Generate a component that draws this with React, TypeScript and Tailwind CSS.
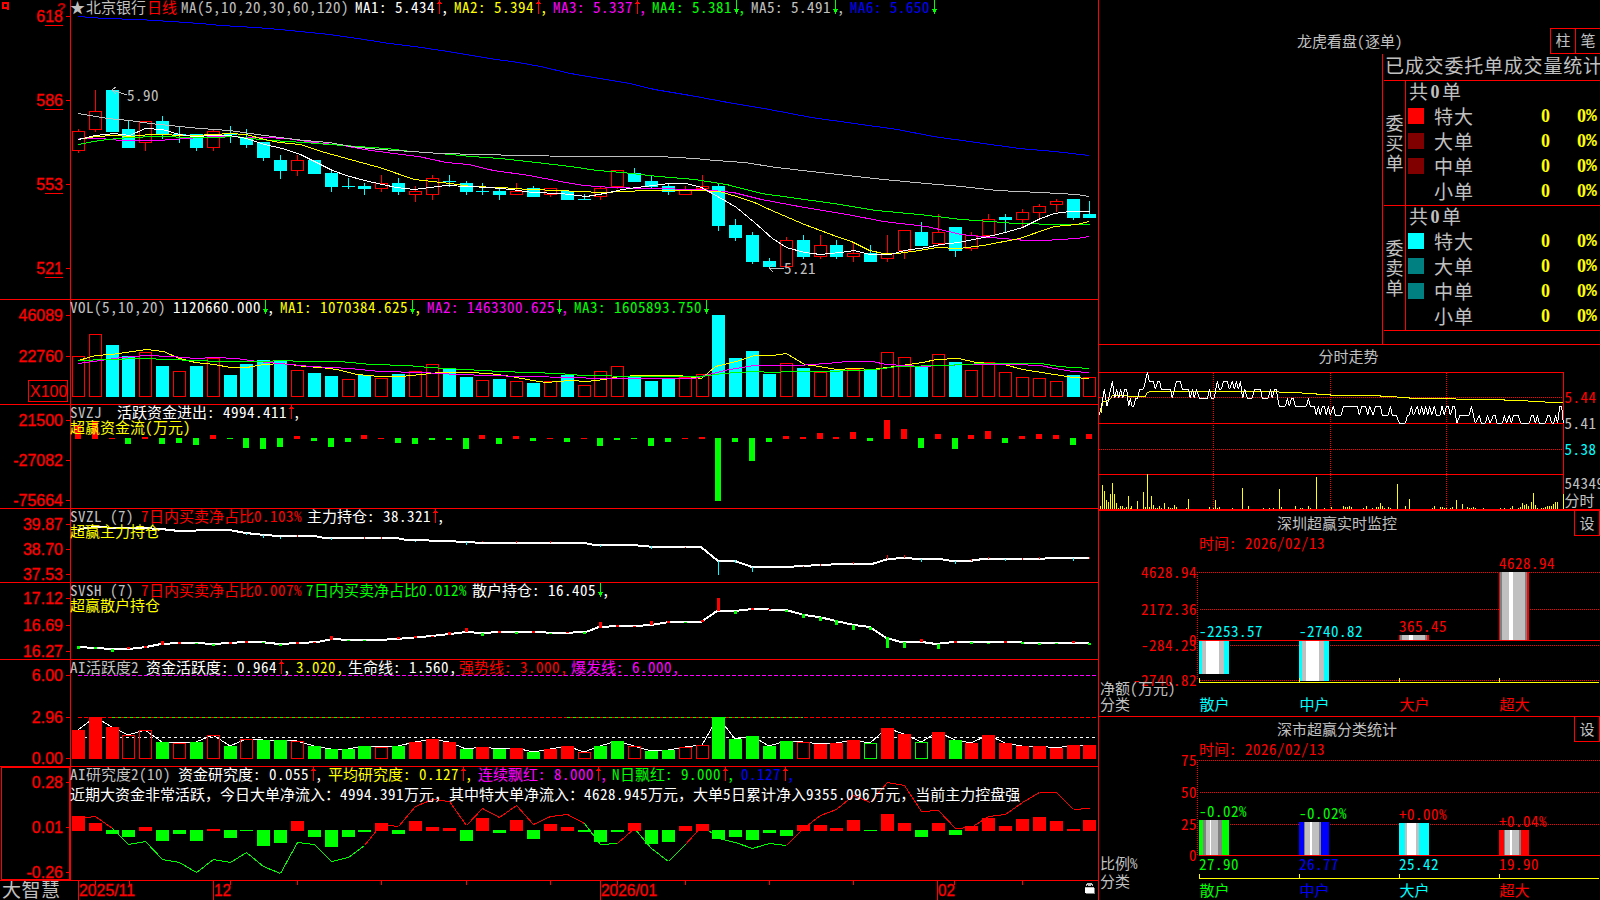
import { ReactNode } from 'react';

const RED = '#ff0000';
const CYAN = '#00ffff';
const GREEN = '#00ff00';
const YELLOW = '#ffff00';
const MAGENTA = '#ff00ff';
const GRAY = '#c0c0c0';
const BLUE = '#0000ff';

const barLeft = (i: number) => Math.floor(72.3 + 16.86 * i);
const barMid = (i: number) => barLeft(i) + 6;

// kind, body top, body bottom, high, low
const candles: [string, number, number, number, number][] = [
  ['r', 131, 151, 129, 153], ['r', 111, 130, 90, 132], ['c', 90, 132, 90, 132], ['c', 129, 148, 121, 148],
  ['r', 121, 143, 121, 151], ['c', 121, 134, 116, 139], ['c', 134, 135, 126, 143], ['c', 134, 148, 134, 151],
  ['r', 131, 148, 129, 151], ['c', 134, 135, 126, 143], ['c', 137, 145, 129, 148], ['c', 142, 158, 142, 161],
  ['c', 160, 171, 155, 179], ['r', 160, 171, 155, 176], ['c', 160, 174, 160, 174], ['c', 173, 187, 170, 192],
  ['c', 186, 187, 178, 189], ['c', 186, 189, 183, 195], ['r', 183, 189, 175, 192], ['c', 183, 192, 178, 195],
  ['r', 191, 195, 186, 202], ['r', 178, 195, 175, 200], ['c', 181, 182, 175, 187], ['c', 183, 192, 181, 195],
  ['c', 191, 192, 183, 195], ['c', 191, 195, 188, 200], ['r', 191, 195, 183, 195], ['c', 188, 197, 186, 197],
  ['r', 188, 195, 188, 197], ['c', 191, 200, 191, 200], ['c', 199, 200, 194, 200], ['r', 188, 197, 187, 200],
  ['r', 170, 187, 170, 189], ['c', 173, 182, 168, 182], ['c', 181, 187, 176, 188], ['c', 186, 192, 184, 195],
  ['r', 189, 195, 186, 195], ['r', 186, 189, 175, 189], ['c', 186, 226, 183, 231], ['c', 225, 238, 219, 241],
  ['c', 235, 262, 232, 264], ['c', 261, 267, 258, 267], ['r', 240, 267, 237, 267], ['c', 240, 257, 235, 259],
  ['r', 245, 257, 235, 259], ['c', 245, 257, 240, 259], ['r', 253, 257, 242, 262], ['c', 253, 262, 245, 262],
  ['r', 253, 259, 235, 262], ['r', 230, 251, 230, 259], ['c', 232, 246, 222, 246], ['r', 232, 244, 214, 246],
  ['c', 227, 251, 227, 257], ['r', 235, 249, 232, 251], ['r', 219, 236, 214, 238], ['c', 217, 220, 214, 232],
  ['r', 212, 220, 209, 227], ['r', 206, 213, 204, 219], ['r', 201, 205, 199, 212], ['c', 199, 218, 199, 220],
  ['c', 214, 218, 201, 218],
];

const priceLines = [
  { color: BLUE, points: '78,16 104,18 138,19 171,21 200,23 221,25 255,27 279,29 300,31 329,34 357,38 389,43 421,47 454,52 489,58 518,62 540,66 570,73 629,83 654,89 690,95 733,103 769,109 811,117 854,123 897,129 933,136 976,142 1019,148 1054,151 1089,155' },
  { color: MAGENTA, points: '78,138 100,138 121,140 157,140 186,138 214,136 264,137 286,138 314,142 343,145 364,149 393,153 418,156 446,162 468,164 493,170 529,175 560,181 583,185 611,187 647,188 701,189 733,192 761,199 804,207 847,214 883,221 926,226 961,234 990,237 1026,240 1044,240 1076,238 1089,236' },
  { color: GREEN, points: '78,144 93,141 107,139 129,137 157,136 193,137 214,137 236,136 250,138 271,140 304,142 329,144 357,146 386,148 411,151 439,153 471,156 500,158 536,162 570,166 597,170 622,172 658,176 694,179 726,184 761,193 797,198 833,203 876,210 919,214 961,219 990,221 1015,223 1061,224 1089,224' },
  { color: GRAY, points: '78,113 89,115 107,118 129,120 150,123 179,126 200,128 229,130 250,133 279,137 304,140 329,142 350,146 379,149 411,151 439,153 479,154 521,155 576,156 658,156 694,158 715,160 744,162 776,167 811,171 847,175 883,179 926,183 961,186 997,190 1040,192 1076,194 1089,196' },
  { color: YELLOW, points: '78,139 96,136 114,135 129,136 150,134 193,135 214,134 229,133 246,134 264,139 279,142 300,144 321,151 346,158 379,167 414,179 450,183 471,186 500,187 529,189 560,190 576,191 604,192 622,191 647,190 694,190 719,191 736,196 754,202 769,209 804,224 836,236 851,241 869,250 883,253 897,253 919,250 936,247 958,248 983,245 1019,238 1054,226 1076,224 1089,221' },
  { color: '#ffffff', points: '78,139 95,135 114,133 129,135 145,128 162,129 179,134 193,136 214,135 229,135 246,138 264,144 282,148 300,154 314,161 332,170 346,175 364,180 382,184 396,187 414,189 429,187 446,185 489,187 511,189 532,192 560,193 586,196 604,193 622,189 644,186 669,183 686,183 701,187 719,197 736,207 754,222 772,238 786,247 804,252 820,254 840,252 854,250 869,254 890,254 904,250 926,247 940,244 958,242 983,237 1001,233 1022,227 1040,218 1054,213 1069,211 1089,211' },
];

const volumes = [41, 63, 52, 41, 45, 31, 26, 31, 39, 22, 33, 37, 37, 27, 24, 21, 18, 22, 19, 23, 26, 33, 28, 20, 17, 18, 16, 14, 16, 22, 12, 26, 31, 21, 16, 19, 20, 23, 82, 39, 46, 23, 34, 29, 25, 27, 28, 28, 45, 40, 31, 43, 35, 27, 35, 25, 20, 19, 16, 22, 20];
const volumeKinds = 'rrccrcrcrccccrccrcrcrrccrcrcrcrrrcccrrccccrcrcrcrrcrcrrrrrrcr';

const volumeLines = [
  { color: YELLOW, points: '78,360 95,355 111,354 125,352 146,349 163,351 179,358 195,362 214,364 230,367 246,367 264,364 282,363 304,366 321,367 336,369 357,374 379,376 400,376 421,374 439,372 468,372 489,373 511,376 532,380 546,382 570,380 586,381 604,379 619,376 640,375 679,375 701,378 715,366 736,361 754,355 772,355 786,353 804,364 819,366 836,369 854,368 872,369 894,366 922,362 936,359 958,358 976,362 1004,364 1022,369 1054,374 1072,377 1089,378' },
  { color: MAGENTA, points: '78,363 100,360 121,357 146,355 171,356 196,358 214,357 236,358 257,361 279,363 311,366 350,368 379,371 421,372 457,374 521,376 576,377 594,378 694,378 708,374 729,369 754,365 797,365 826,363 847,361 872,361 886,364 922,366 940,365 969,364 1015,364 1040,365 1054,368 1072,371 1089,372' },
  { color: GREEN, points: '78,360 107,359 143,358 168,359 221,361 257,361 289,360 296,361 339,361 371,364 407,365 429,367 464,369 500,371 529,372 560,373 569,374 583,375 640,376 701,376 722,373 754,371 772,372 790,371 826,371 854,370 876,369 897,366 944,365 983,363 1040,363 1058,366 1089,368' },
];

const fundFlow = [14, 18, 1, -6, 2, -6, -5, -7, 4, -1, -10, -11, -9, 3, -3, -9, -4, 4, 1, -5, -6, -2, -2, -11, 4, -6, 3, -3, 1, -4, 1, -8, -2, -1, -8, -4, 1, 2, -63, -4, -23, -4, 3, 2, 6, 2, 7, -3, 19, 10, -10, 5, -11, 4, 8, -5, 3, 5, 4, -7, 5];

const mainHold = '78,530 86,528 96,527 118,528 143,528 161,529 179,531 214,530 229,530 246,533 264,535 279,536 314,536 325,538 396,538 407,540 450,541 461,542 489,543 585,543 594,545 633,545 654,547 701,547 718,561 735,561 752,567 786,567 819,565 844,564 872,564 888,559 904,558 919,559 940,559 952,561 969,561 983,559 1036,559 1054,558 1090,558';
const mainTicks: [number, number, number, string][] = [
  [10, 533, 535, CYAN], [11, 535, 538, CYAN], [12, 537, 539, CYAN], [13, 535, 537, RED], [15, 538, 540, CYAN],
  [17, 537, 539, RED], [18, 537, 539, RED], [20, 541, 542, CYAN], [23, 542, 545, CYAN], [24, 541, 542, RED],
  [26, 541, 543, RED], [28, 541, 543, RED], [31, 545, 547, CYAN], [34, 546, 549, CYAN], [36, 547, 548, RED],
  [38, 561, 575, CYAN], [39, 560, 563, CYAN], [40, 567, 572, CYAN], [43, 566, 567, RED], [44, 564, 566, RED],
  [46, 562, 564, RED], [48, 555, 559, RED], [49, 555, 558, RED], [50, 559, 562, CYAN], [52, 561, 564, CYAN],
  [53, 559, 561, RED], [54, 557, 559, RED], [55, 559, 561, CYAN], [56, 558, 560, RED], [57, 557, 559, RED],
  [59, 558, 561, CYAN], [60, 557, 559, RED],
];

const retailHold = '78,647 96,648 111,649 129,649 146,647 161,644 179,643 196,643 214,644 229,643 246,642 261,642 279,644 300,643 318,642 332,639 350,640 379,640 396,639 432,636 450,634 466,632 482,633 500,632 532,632 560,633 586,632 599,627 619,626 636,626 651,625 669,622 701,622 717,611 735,611 752,609 786,610 804,615 819,617 836,621 854,625 870,627 886,638 901,642 922,642 936,644 954,642 1089,643';
const retailTicks: [number, number, number, string][] = [
  [0, 646, 649, GREEN], [1, 647, 649, GREEN], [2, 649, 652, GREEN], [3, 647, 649, RED], [4, 646, 648, RED],
  [5, 641, 645, RED], [6, 642, 644, RED], [7, 643, 644, GREEN], [8, 644, 646, GREEN], [9, 642, 644, RED],
  [10, 641, 643, RED], [11, 642, 643, GREEN], [12, 644, 646, GREEN], [13, 642, 644, RED], [14, 642, 643, RED],
  [15, 636, 640, RED], [16, 640, 641, GREEN], [17, 640, 641, GREEN], [19, 637, 639, RED], [20, 636, 638, RED],
  [21, 636, 637, RED], [22, 632, 635, RED], [23, 628, 632, RED], [24, 633, 636, GREEN], [25, 631, 633, RED],
  [26, 632, 634, GREEN], [27, 631, 633, RED], [28, 633, 634, GREEN], [29, 632, 633, RED], [30, 632, 634, GREEN],
  [31, 622, 628, RED], [32, 625, 627, RED], [33, 626, 627, RED], [34, 621, 625, RED], [35, 621, 623, RED],
  [36, 622, 623, GREEN], [37, 620, 622, RED], [38, 598, 611, RED], [39, 611, 614, GREEN], [40, 608, 610, RED],
  [41, 609, 610, RED], [42, 610, 612, GREEN], [43, 614, 618, GREEN], [44, 617, 621, GREEN], [45, 620, 625, GREEN],
  [46, 625, 630, GREEN], [47, 627, 630, GREEN], [48, 637, 648, GREEN], [49, 642, 648, GREEN], [50, 639, 642, RED],
  [51, 644, 649, GREEN], [52, 641, 643, RED], [53, 642, 644, GREEN], [54, 643, 644, GREEN], [55, 641, 643, RED],
  [56, 642, 644, GREEN], [57, 643, 645, GREEN], [58, 643, 644, GREEN], [59, 641, 643, RED], [60, 643, 645, GREEN],
];

// R/G are solid, r/g are outlined
const activityKinds = 'RRRrrGrGrGrGGrGGGGrGRRRGRGRGRRrGGrGGrrGGGGGrRRRgRRgRGRRRRRRRR';
const activity = [29, 42, 32, 24, 29, 17, 16, 17, 24, 13, 20, 19, 19, 18, 13, 10, 10, 13, 12, 13, 17, 20, 17, 10, 12, 10, 11, 7, 10, 13, 7, 13, 18, 13, 8, 9, 12, 14, 42, 20, 23, 13, 18, 17, 15, 16, 19, 16, 31, 25, 17, 27, 19, 16, 24, 16, 13, 13, 11, 14, 14];

const research = [15, 8, -4, -7, 4, -11, -4, -11, 2, -8, -1, -16, -13, 10, -7, -17, -7, -2, 8, -4, 10, 4, 3, -11, 13, -3, 11, -9, 7, 4, -2, -12, -2, 8, -14, -12, 5, 7, -9, -7, -10, -3, -6, 6, 6, 3, 11, -1, 17, 8, -7, 8, -5, 5, 13, 5, 12, 14, 10, 2, 11];
const researchLine = [818, 816, 828, 844, 841, 859, 862, 872, 859, 862, 852, 866, 873, 842, 844, 861, 857, 845, 824, 826, 806, 799, 801, 825, 808, 817, 805, 824, 816, 814, 823, 844, 843, 828, 848, 861, 844, 825, 838, 842, 848, 843, 845, 828, 815, 809, 795, 802, 782, 785, 811, 810, 828, 827, 816, 814, 802, 792, 792, 809, 808];

// intraday series, in thirds of a pixel from the panel's left and top edge
const intraday = '28,226 34,199 43,148 51,199 67,124 74,175 80,148 86,175 92,148 98,175 104,148 110,148 116,199 121,175 125,199 131,199 137,175 143,175 149,148 160,148 166,124 172,97 178,124 190,124 196,148 203,124 209,124 214,148 241,148 247,175 253,148 259,124 271,124 277,148 295,148 301,175 307,148 313,175 319,148 328,175 353,175 358,148 364,175 373,175 377,148 382,124 388,148 394,148 400,124 412,124 418,148 427,124 433,148 439,124 445,148 451,124 458,175 464,148 472,175 487,175 493,148 511,148 517,175 535,175 541,148 547,175 553,148 558,148 568,199 586,199 592,175 598,199 604,175 610,175 616,199 649,199 655,175 661,199 673,199 679,226 685,199 691,226 697,199 703,199 709,226 715,199 721,226 730,199 736,226 754,226 760,199 802,199 808,226 815,199 827,199 833,226 839,199 850,226 856,199 871,199 877,226 895,226 901,199 907,226 919,226 928,250 946,250 952,226 958,226 964,199 970,226 982,199 988,226 995,199 1001,226 1007,199 1013,226 1019,199 1025,226 1033,199 1039,226 1050,226 1056,199 1063,226 1069,199 1075,199 1081,226 1089,199 1094,199 1100,250 1110,226 1138,226 1144,199 1156,250 1168,226 1174,250 1186,250 1192,226 1200,250 1210,226 1216,226 1220,250 1237,250 1243,226 1250,250 1258,226 1264,250 1270,226 1285,226 1292,250 1318,250 1324,226 1330,226 1336,250 1342,226 1348,250 1366,250 1373,226 1379,226 1385,250 1391,250 1397,226 1403,250 1409,199 1415,199 1420,250';
const intradayAvg = '34,220 37,187 58,181 67,167 110,167 113,170 166,170 172,157 187,154 566,154 568,157 635,157 636,160 678,160 679,163 720,163 721,166 870,166 871,169 920,169 922,172 957,172 958,175 1097,175 1098,178 1242,178 1243,181 1313,181 1315,184 1364,184 1366,187 1420,187';
const intradayVol = '31:498 37:435 43:453 49:480 55:486 61:462 67:429 73:462 79:489 85:504 91:498 97:498 103:504 109:501 115:468 121:504 124:498 142:483 160:456 166:501 172:402 178:501 184:468 190:495 196:504 202:504 208:498 214:504 223:489 235:501 241:504 247:504 253:495 259:501 289:504 295:477 358:501 370:504 376:480 382:504 388:501 427:504 457:444 475:498 520:504 538:504 550:504 568:447 574:501 616:498 631:504 637:504 655:498 661:504 679:411 703:504 724:501 760:498 766:501 772:501 778:498 784:501 820:504 829:498 847:504 859:501 865:501 871:489 877:498 883:504 895:501 901:504 922:432 946:498 958:477 1027:504 1033:498 1051:501 1057:501 1063:504 1069:504 1081:504 1087:501 1099:480 1117:492 1132:501 1138:504 1144:504 1150:501 1156:504 1180:504 1231:504 1243:504 1261:504 1267:498 1285:504 1291:501 1297:489 1303:495 1309:492 1315:498 1324:486 1330:459 1336:495 1342:504 1354:504 1360:504 1366:501 1372:498 1378:498 1384:498 1390:492 1396:486 1402:486 1420:462'
  .split(' ')
  .map(p => p.split(':').map(Number));

// Latin runs use the half-width forms at an 8px pitch, everything else stays on the 15px CJK grid
const splitRuns = (text: string) => text.split(/([\x20-\x7e]+)/).filter(Boolean);
const isLatin = (run: string) => /^[\x20-\x7e]/.test(run);
const HALF = "[font-feature-settings:'hwid'] tracking-[0.5px]";

function Mixed({ text }: { text: string }) {
  return (
    <>
      {splitRuns(text).map((run, i) => (
        <span key={i} className={isLatin(run) ? HALF : ''}>{run}</span>
      ))}
    </>
  );
}

function Label({ x, y, color, end, text }: { x: number, y: number, color: string, end?: boolean, text: string }) {
  return (
    <text x={x} y={y + 5} fill={color} textAnchor={end ? 'end' : 'start'} className="text-[15px] whitespace-pre">
      {splitRuns(text).map((run, i) => (
        <tspan key={i} className={isLatin(run) ? HALF : ''}>{run}</tspan>
      ))}
    </text>
  );
}

function Arrow({ dir }: { dir: 'up' | 'down' }) {
  return (
    <svg width="9" height="15" viewBox="0 0 9 15" className="shrink-0" shapeRendering="crispEdges">
      {dir === 'up'
        ? <path d="M4 0h1v14h-1zM3 2h3v1h-3zM2 3h5v1h-5z" fill={RED} />
        : <path d="M4 0h1v14h-1zM2 9h5v1h-5zM3 10h3v2h-3z" fill={GREEN} />}
    </svg>
  );
}

type Seg = { text: string, cls: string, arrow?: 'up' | 'down', tail?: string };

function Legend({ items }: { items: Seg[] }) {
  return (
    <div className="relative flex h-4 pl-[70px] leading-[14px] whitespace-pre">
      {items.map((item, i) => (
        <div key={i} className={`flex shrink-0 ${item.cls}`}>
          <span><Mixed text={item.text} /></span>
          {item.arrow && <Arrow dir={item.arrow} />}
          {item.tail && <span className="-ml-[3px]"><Mixed text={item.tail} /></span>}
        </div>
      ))}
    </div>
  );
}

function Note({ children }: { children: string }) {
  return (
    <div className="relative h-[14px] pl-[70px] leading-[12px] text-[#ffff00] whitespace-pre">
      <Mixed text={children} />
    </div>
  );
}

function Panel({ top, height, className, ticks, chart, children }: { top: number, height: number, className: string, ticks: [string, number][], chart: ReactNode, children: ReactNode }) {
  return (
    <section className={`relative shrink-0 overflow-hidden border-b border-[#ff0000] ${className}`}>
      <svg width="1098" height={height} viewBox={`0 ${top} 1098 ${height}`} className="absolute top-0 left-0" shapeRendering="crispEdges">
        <rect x="70" y={top} width="1" height={height} fill={RED} />
        {ticks.map(([label, y]) => (
          <g key={label}>
            <rect x="66" y={y} width="4" height="1" fill={RED} />
            <text x="63" y={y + 6} fill={RED} stroke={RED} strokeWidth="0.3" textAnchor="end" className="font-['Liberation_Sans',sans-serif] text-[16px]">{label}</text>
          </g>
        ))}
        {chart}
      </svg>
      {children}
    </section>
  );
}

function Bar({ x, y, w, h, color, hollow }: { x: number, y: number, w: number, h: number, color: string, hollow?: boolean }) {
  return hollow
    ? <rect x={x + 0.5} y={y + 0.5} width={w - 1} height={Math.max(h - 1, 1)} fill="none" stroke={color} />
    : <rect x={x} y={y} width={w} height={h} fill={color} />;
}

function Lines({ lines }: { lines: { color: string, points: string }[] }) {
  return (
    <g transform="translate(0.5 0.5)">
      {lines.map((l, i) => <polyline key={i} points={l.points} fill="none" stroke={l.color} />)}
    </g>
  );
}

function PriceChart() {
  return (
    <>
      <path d="M3 3h5v5h-5zM7 8l2 2" fill="none" stroke={RED} strokeWidth="2" />
      <text x="57" y="13" fill="#c00000" className="font-['Liberation_Mono',monospace] text-[15px] font-bold">?</text>
      {[25, 109, 193, 277].map(y => <rect key={y} x="45" y={y} width="18" height="1" fill={RED} />)}
      {candles.map(([kind, top, bottom, high, low], i) => {
        const color = kind === 'r' ? RED : CYAN;
        return (
          <g key={i}>
            {high < top && <rect x={barMid(i)} y={high} width="1" height={top - high} fill={color} />}
            {low > bottom && <rect x={barMid(i)} y={bottom} width="1" height={low - bottom} fill={color} />}
            <Bar x={barLeft(i)} y={top} w={13} h={bottom - top} color={color} hollow={kind === 'r'} />
          </g>
        );
      })}
      <Lines lines={priceLines} />
      <path d="M116 87l-4 3 4 4M112 90l15 5" fill="none" stroke={GRAY} />
      <Label x={127} y={96} color={GRAY} text="5.90" />
      <path d="M773 264l-4 4 4 4M769 268.5h15" fill="none" stroke={GRAY} />
      <Label x={784} y={269} color={GRAY} text="5.21" />
    </>
  );
}

function VolumeChart() {
  return (
    <>
      {volumes.map((h, i) => (
        <Bar key={i} x={barLeft(i)} y={397 - h} w={13} h={h} color={volumeKinds[i] === 'r' ? RED : CYAN} hollow={volumeKinds[i] === 'r'} />
      ))}
      <Lines lines={volumeLines} />
      <rect x="28.5" y="380.5" width="39" height="21" fill="none" stroke={RED} />
      <text x="30" y="397" fill={RED} className="font-['Liberation_Sans',sans-serif] text-[16px]">X100</text>
    </>
  );
}

function ActivityChart() {
  const tops = activity.map((h, i) => `${barMid(i)},${759 - h}`).join(' ');
  return (
    <>
      <path d="M78 675.5H1096" stroke={MAGENTA} strokeDasharray="4 2" />
      <path d="M78 717.5H1096" stroke={RED} strokeDasharray="4 2" />
      <path d="M112 717.5H360M567 717.5H803" stroke={GREEN} strokeDasharray="3 3" />
      <path d="M78 737.5H1096" stroke="#ffffff" strokeDasharray="3 3" />
      <polyline points={tops} fill="none" stroke="#ffffff" />
      {activity.map((h, i) => {
        const kind = activityKinds[i];
        return <Bar key={i} x={barLeft(i)} y={759 - h} w={13} h={h} color={kind.toLowerCase() === 'r' ? RED : GREEN} hollow={kind === kind.toLowerCase()} />;
      })}
    </>
  );
}

function ResearchChart() {
  return (
    <>
      <rect x="1.5" y="767.5" width="68" height="112" fill="none" stroke={RED} />
      {researchLine.slice(1).map((y, i) => (
        <line key={i} x1={barMid(i) + 0.5} y1={researchLine[i] + 0.5} x2={barMid(i + 1) + 0.5} y2={y + 0.5} stroke={y <= 830 ? RED : GREEN} />
      ))}
      {research.map((v, i) => (
        <rect key={i} x={barLeft(i)} y={v > 0 ? 831 - v : 830} width="13" height={Math.abs(v)} fill={v > 0 ? RED : GREEN} />
      ))}
    </>
  );
}

function DateAxis() {
  const months: [number, string][] = [[78, '2025/11'], [213, '12'], [600, '2026/01'], [937, '02']];
  return (
    <footer className="relative h-[19px] shrink-0 overflow-hidden">
      <span className="block pl-0.5 text-[19px] leading-[16px] tracking-[0.5px] text-[#c0c0c0]">大智慧</span>
      <svg width="1098" height="19" viewBox="0 881 1098 19" className="absolute top-0 left-0" shapeRendering="crispEdges">
        {[95, 129, 230, 297, 381, 466, 550, 617, 685, 769, 853, 954, 1022].map(x => (
          <rect key={x} x={x} y="881" width="1" height="4" fill={RED} />
        ))}
        {months.map(([x, label]) => (
          <g key={label}>
            <rect x={x} y="881" width="1" height="19" fill={RED} />
            <text x={x + 1} y="896" fill={RED} stroke={RED} strokeWidth="0.3" textLength={label.length > 2 ? 56 : 17} lengthAdjust="spacingAndGlyphs" className="font-['Liberation_Sans',sans-serif] text-[16px]">{label}</text>
          </g>
        ))}
        <path d="M1086 884h1v-1h5v1h1v2h-1v-1h-5v1h-1zM1088 885h3v1h-3z" fill={GRAY} />
        <rect x="1086" y="888" width="9" height="6" fill="#808080" />
        <rect x="1085" y="887" width="9" height="6" fill="#ffffff" />
        <rect x="1085" y="887" width="9" height="1" fill={GRAY} />
      </svg>
    </footer>
  );
}

function OrderGroup({ side, colors }: { side: string, colors: string[] }) {
  const sizes = ['特大', '大单', '中单', '小单'];
  return (
    <div className="flex h-[125px] border-b border-[#ff0000]">
      <div className="flex w-[22px] shrink-0 flex-col items-center border-r border-[#ff0000] pt-[31px] text-[18px] leading-5 text-[#c0c0c0]">
        {side.split('').map(ch => <span key={ch}>{ch}</span>)}
      </div>
      <div className="flex-1 text-[19px]">
        <div className="flex h-[25px] pl-[3px] leading-5 text-[#c0c0c0]">
          <span>共</span>
          <span className="w-[14px] text-center font-['Liberation_Serif',serif] text-[18px] leading-[23px] font-bold">0</span>
          <span>单</span>
        </div>
        {sizes.map((size, i) => (
          <div key={size} className="flex h-[25px] items-start">
            <span className={`mt-[2px] ml-[2px] size-4 shrink-0 ${colors[i]}`} />
            <span className="ml-[10px] w-[103px] shrink-0 leading-[19px] tracking-[1px] text-[#c0c0c0]">{size}</span>
            <span className="w-[13px] shrink-0 text-right font-['Liberation_Serif',serif] text-[18px] leading-[21px] font-bold text-[#ffff00]">0</span>
            <span className="w-[36px] shrink-0 text-right font-['Liberation_Serif',serif] text-[18px] leading-[21px] font-bold text-[#ffff00]">0</span>
            <span className="font-['Liberation_Mono',monospace] text-[18px] leading-[21px] font-bold text-[#ffff00]">%</span>
          </div>
        ))}
      </div>
    </div>
  );
}

function OrderPanel() {
  return (
    <section className="h-[345px] shrink-0 border-b border-[#ff0000] pt-7">
      <div className="flex h-[26px] justify-between">
        <h2 className="ml-[198px] leading-[25px] text-[#c0c0c0]"><Mixed text="龙虎看盘(逐单)" /></h2>
        <div className="flex h-[26px] w-[50px] shrink-0 border-y border-l border-[#ff0000] text-center leading-[21px] text-[#c0c0c0]">
          <span className="w-[25px] shrink-0 border-r border-[#ff0000]">柱</span>
          <span className="w-[24px] shrink-0">笔</span>
        </div>
      </div>
      <div className="ml-[283px] h-[290px] border-l border-[#ff0000] pl-px">
        <div className="h-[27px] overflow-hidden border-b border-[#ff0000] pl-px text-[19px] leading-[22px] tracking-[0.8px] whitespace-nowrap text-[#c0c0c0]">已成交委托单成交量统计</div>
        <OrderGroup side="委买单" colors={['bg-[#ff0000]', 'bg-[#800000]', 'bg-[#800000]', 'bg-black']} />
        <OrderGroup side="委卖单" colors={['bg-[#00ffff]', 'bg-[#008080]', 'bg-[#008080]', 'bg-black']} />
      </div>
    </section>
  );
}

function IntradayPanel() {
  return (
    <section className="relative h-[166px] shrink-0 border-b-2 border-[#ff0000]">
      <h2 className="pr-[2px] text-center leading-[22px] text-[#c0c0c0]">分时走势</h2>
      <svg width="501" height="164" viewBox="1099 345 501 164" className="absolute top-0 left-0" shapeRendering="crispEdges">
        <path d="M1099 372.5H1563.5V509M1099 423.5H1563M1099 474.5H1563" fill="none" stroke={RED} />
        <path d="M1099 397.5H1563M1099 449.5H1563M1213.5 373V509M1330.5 373V509M1446.5 373V509" stroke={RED} strokeDasharray="1 1" />
        <g transform="translate(1090 340) scale(0.33333)">
          {intradayVol.map(([x, y]) => <rect key={x} x={x - 1} y={y} width="3" height={507 - y} fill={YELLOW} />)}
          <polyline points={intradayAvg} fill="none" stroke={YELLOW} strokeWidth="3" />
          <polyline points={intraday} fill="none" stroke="#ffffff" strokeWidth="3" />
        </g>
        <Label x={1564.5} y={398} color={RED} text="5.44" />
        <Label x={1564.5} y={424} color={GRAY} text="5.41" />
        <Label x={1564.5} y={450} color={CYAN} text="5.38" />
        <Label x={1564.5} y={484} color={GRAY} text="54349" />
        <Label x={1564.5} y={501} color={GRAY} text="分时" />
      </svg>
    </section>
  );
}

function Stripes({ x, y, h, stripes }: { x: number, y: number, h: number, stripes: [string, number][] }) {
  let cursor = x;
  return (
    <>
      {stripes.map(([color, w], i) => {
        const left = cursor;
        cursor += w;
        return <rect key={i} x={left} y={y} width={w} height={h} fill={color} />;
      })}
    </>
  );
}

function PanelTitle({ children }: { children: string }) {
  return (
    <header className="flex h-[25px] justify-between">
      <h2 className="ml-[178px] leading-[23px] text-[#c0c0c0]">{children}</h2>
      <button className="h-[25px] w-[26px] border border-t-0 border-[#ff0000] text-center leading-[20px] text-[#c0c0c0]">设</button>
    </header>
  );
}

const W = '#ffffff';
const DIM = '#808080';
const loss: [string, number][] = [[CYAN, 3], [GRAY, 4], [W, 13], [GRAY, 5], [CYAN, 5]];
const gain: [string, number][] = [[RED, 1], [DIM, 2], [GRAY, 7], [W, 4], [GRAY, 12], [DIM, 2], [RED, 2]];

function NetPanel() {
  const groups = [
    { name: '散户', value: '-2253.57', color: CYAN, y: 641, h: 33, labelY: 632, stripes: loss },
    { name: '中户', value: '-2740.82', color: CYAN, y: 641, h: 40, labelY: 632, stripes: loss },
    { name: '大户', value: '365.45', color: RED, y: 635, h: 5, labelY: 627, stripes: gain },
    { name: '超大', value: '4628.94', color: RED, y: 572, h: 68, labelY: 564, stripes: gain },
  ];
  return (
    <section className="relative h-[206px] shrink-0 border-b border-[#ff0000]">
      <PanelTitle>深圳超赢实时监控</PanelTitle>
      <svg width="501" height="205" viewBox="1099 511 501 205" className="pointer-events-none absolute top-0 left-0" shapeRendering="crispEdges">
        <Label x={1199} y={544} color={RED} text="时间: 2026/02/13" />
        <path d="M1197 572.5H1600M1200 609.5H1600M1200 645.5H1600M1200 680.5H1600M1197.5 572V680" stroke={RED} strokeDasharray="1 1" />
        <Label x={1197} y={573} color={RED} end text="4628.94" />
        <Label x={1197} y={610} color={RED} end text="2172.36" />
        <Label x={1197} y={641} color={RED} end text="0" />
        <Label x={1197} y={646} color={RED} end text="-284.23" />
        <Label x={1197} y={681} color={RED} end text="-2740.82" />
        {groups.map((g, i) => (
          <g key={g.name}>
            <Stripes x={1199 + i * 100} y={g.y} h={g.h} stripes={g.stripes} />
            <Label x={1199 + i * 100} y={g.labelY} color={g.color} text={g.value} />
            <Label x={1199.5 + i * 100} y={705} color={g.color} text={g.name} />
            <rect x={1199 + i * 100} y="678" width="1" height="4" fill={YELLOW} />
          </g>
        ))}
        <rect x="1199" y="640" width="401" height="1" fill={RED} />
        <rect x="1199" y="682" width="400" height="1" fill={YELLOW} />
        <Label x={1100} y={689} color={GRAY} text="净额(万元)" />
        <Label x={1100} y={705} color={GRAY} text="分类" />
      </svg>
    </section>
  );
}

function RatioPanel() {
  const groups: { name: string, value: string, diff: string, diffColor: string, color: string, y: number, labelY: number, stripes: [string, number][] }[] = [
    { name: '散户', value: '27.90', diff: '-0.02%', diffColor: GREEN, color: GREEN, y: 820, labelY: 812, stripes: [[GREEN, 4], [DIM, 3], [GRAY, 4], [W, 1], [GRAY, 7], [DIM, 4], [GREEN, 7]] },
    { name: '中户', value: '26.77', diff: '-0.02%', diffColor: GREEN, color: BLUE, y: 822, labelY: 814, stripes: [[BLUE, 5], [DIM, 1], [GRAY, 5], [W, 2], [GRAY, 7], [DIM, 2], [BLUE, 8]] },
    { name: '大户', value: '25.42', diff: '+0.00%', diffColor: RED, color: CYAN, y: 823, labelY: 815, stripes: [[CYAN, 6], [GRAY, 2], [W, 9], [GRAY, 3], [CYAN, 10]] },
    { name: '超大', value: '19.90', diff: '+0.04%', diffColor: RED, color: RED, y: 830, labelY: 822, stripes: [[RED, 5], [DIM, 1], [GRAY, 5], [W, 2], [GRAY, 7], [DIM, 2], [RED, 8]] },
  ];
  return (
    <section className="relative h-[183px] shrink-0">
      <PanelTitle>深市超赢分类统计</PanelTitle>
      <svg width="501" height="183" viewBox="1099 717 501 183" className="pointer-events-none absolute top-0 left-0" shapeRendering="crispEdges">
        <Label x={1199} y={750} color={RED} text="时间: 2026/02/13" />
        <path d="M1197 760.5H1600M1200 792.5H1600M1200 824.5H1600M1197.5 760V855" stroke={RED} strokeDasharray="1 1" />
        <Label x={1197} y={761} color={RED} end text="75" />
        <Label x={1197} y={793} color={RED} end text="50" />
        <Label x={1197} y={825} color={RED} end text="25" />
        <Label x={1197} y={856} color={RED} end text="0" />
        {groups.map((g, i) => (
          <g key={g.name}>
            <Stripes x={1199 + i * 100} y={g.y} h={855 - g.y} stripes={g.stripes} />
            <Label x={1199 + i * 100} y={g.labelY} color={g.diffColor} text={g.diff} />
            <Label x={1199 + i * 100} y={865} color={g.color} text={g.value} />
            <Label x={1199.5 + i * 100} y={891} color={g.color} text={g.name} />
            <rect x={1199 + i * 100} y="874" width="1" height="4" fill={YELLOW} />
          </g>
        ))}
        <rect x="1199" y="855" width="401" height="1" fill={RED} />
        <rect x="1199" y="878" width="400" height="1" fill={YELLOW} />
        <Label x={1100} y={864} color={GRAY} text="比例%" />
        <Label x={1100} y={882} color={GRAY} text="分类" />
      </svg>
    </section>
  );
}

export default function App() {
  return (
    <div className="flex h-[900px] w-[1600px] overflow-hidden bg-black font-['Noto_Sans_CJK_SC',sans-serif] text-[15px]">
      <main className="flex w-[1098px] shrink-0 flex-col">
        <Panel top={0} height={299} className="h-[300px]" ticks={[['618', 16], ['586', 100], ['553', 184], ['521', 268]]} chart={<PriceChart />}>
          <Legend items={[
            { text: '★', cls: 'w-[16px] text-[#c0c0c0]' },
            { text: '北京银行', cls: 'w-[61px] text-[#c0c0c0]' },
            { text: '日线', cls: 'w-[34px] text-[#ff0000]' },
            { text: 'MA(5,10,20,30,60,120)', cls: 'w-[174px] text-[#c0c0c0]' },
            { text: 'MA1: 5.434', cls: 'w-[99px] text-white', arrow: 'up', tail: ',' },
            { text: 'MA2: 5.394', cls: 'w-[99px] text-[#ffff00]', arrow: 'up', tail: ',' },
            { text: 'MA3: 5.337', cls: 'w-[99px] text-[#ff00ff]', arrow: 'up', tail: ',' },
            { text: 'MA4: 5.381', cls: 'w-[99px] text-[#00ff00]', arrow: 'down', tail: ',' },
            { text: 'MA5: 5.491', cls: 'w-[99px] text-[#c0c0c0]', arrow: 'down', tail: ',' },
            { text: 'MA6: 5.650', cls: 'text-[#0000ff]', arrow: 'down' },
          ]} />
        </Panel>
        <Panel top={300} height={104} className="h-[105px]" ticks={[['46089', 315], ['22760', 356]]} chart={<VolumeChart />}>
          <Legend items={[
            { text: 'VOL(5,10,20)', cls: 'w-[103px] text-[#c0c0c0]' },
            { text: '1120660.000', cls: 'w-[107px] text-white', arrow: 'down', tail: ',' },
            { text: 'MA1: 1070384.625', cls: 'w-[147px] text-[#ffff00]', arrow: 'down', tail: ',' },
            { text: 'MA2: 1463300.625', cls: 'w-[147px] text-[#ff00ff]', arrow: 'down', tail: ',' },
            { text: 'MA3: 1605893.750', cls: 'text-[#00ff00]', arrow: 'down' },
          ]} />
        </Panel>
        <Panel top={405} height={103} className="h-[104px]" ticks={[['21500', 420], ['-27082', 460], ['-75664', 500]]} chart={fundFlow.map((v, i) => (
          <rect key={i} x={barLeft(i) + 3} y={v > 0 ? 439 - v : 438} width="6" height={Math.abs(v)} fill={v > 0 ? RED : GREEN} />
        ))}>
          <Legend items={[
            { text: 'SVZJ', cls: 'w-[47px] text-[#c0c0c0]' },
            { text: '活跃资金进出: 4994.411', cls: 'text-white', arrow: 'up', tail: ',' },
          ]} />
          <Note>超赢资金流(万元)</Note>
        </Panel>
        <Panel top={509} height={73} className="h-[74px]" ticks={[['39.87', 524], ['38.70', 549], ['37.53', 574]]} chart={
          <>
            <polyline points={mainHold} fill="none" stroke="#ffffff" strokeWidth="2" />
            {mainTicks.map(([i, y1, y2, color]) => <rect key={i} x={barMid(i)} y={y1} width="1" height={y2 - y1} fill={color} />)}
          </>
        }>
          <Legend items={[
            { text: 'SVZL (7)', cls: 'w-[71px] text-[#c0c0c0]' },
            { text: '7日内买卖净占比0.103%', cls: 'w-[166px] text-[#ff0000]' },
            { text: '主力持仓: 38.321', cls: 'text-white', arrow: 'up', tail: ',' },
          ]} />
          <Note>超赢主力持仓</Note>
        </Panel>
        <Panel top={583} height={76} className="h-[77px]" ticks={[['17.12', 598], ['16.69', 625], ['16.27', 651]]} chart={
          <>
            <polyline points={retailHold} fill="none" stroke="#ffffff" strokeWidth="2" />
            {retailTicks.map(([i, y1, y2, color]) => <rect key={i} x={barMid(i) - 1} y={y1} width="3" height={y2 - y1} fill={color} />)}
          </>
        }>
          <Legend items={[
            { text: 'SVSH (7)', cls: 'w-[71px] text-[#c0c0c0]' },
            { text: '7日内买卖净占比0.007%', cls: 'w-[165px] text-[#ff0000]' },
            { text: '7日内买卖净占比0.012%', cls: 'w-[166px] text-[#00ff00]' },
            { text: '散户持仓: 16.405', cls: 'text-white', arrow: 'down', tail: ',' },
          ]} />
          <Note>超赢散户持仓</Note>
        </Panel>
        <Panel top={660} height={106} className="h-[107px]" ticks={[['6.00', 675], ['2.96', 717], ['0.00', 758]]} chart={<ActivityChart />}>
          <Legend items={[
            { text: 'AI活跃度2', cls: 'w-[76px] text-[#c0c0c0]' },
            { text: '资金活跃度: 0.964', cls: 'w-[150px] text-white', arrow: 'up', tail: ',' },
            { text: '3.020,', cls: 'w-[52px] text-[#ffff00]' },
            { text: '生命线: 1.560,', cls: 'w-[111px] text-white' },
            { text: '强势线: 3.000,', cls: 'w-[112px] text-[#ff0000]' },
            { text: '爆发线: 6.000,', cls: 'text-[#ff00ff]' },
          ]} />
        </Panel>
        <Panel top={767} height={113} className="h-[114px]" ticks={[['0.28', 782], ['0.01', 827], ['-0.26', 872]]} chart={<ResearchChart />}>
          <Legend items={[
            { text: 'AI研究度2(10)', cls: 'w-[108px] text-[#c0c0c0]' },
            { text: '资金研究度: 0.055', cls: 'w-[150px] text-white', arrow: 'up', tail: ',' },
            { text: '平均研究度: 0.127', cls: 'w-[150px] text-[#ffff00]', arrow: 'up', tail: ',' },
            { text: '连续飘红: 8.000', cls: 'w-[134px] text-[#ff00ff]', arrow: 'up', tail: ',' },
            { text: 'N日飘红: 9.000', cls: 'w-[129px] text-[#00ff00]', arrow: 'up', tail: ',' },
            { text: '0.127', cls: 'text-[#0000ff]', arrow: 'up', tail: ',' },
          ]} />
          <p className="relative mt-[3px] pl-[70px] leading-4 whitespace-nowrap text-white">
            <Mixed text="近期大资金非常活跃，今日大单净流入：4994.391万元，其中特大单净流入：4628.945万元，大单5日累计净入9355.096万元，当前主力控盘强" />
          </p>
        </Panel>
        <DateAxis />
      </main>
      <aside className="flex w-[502px] shrink-0 flex-col border-l border-[#ff0000]">
        <OrderPanel />
        <IntradayPanel />
        <NetPanel />
        <RatioPanel />
      </aside>
    </div>
  );
}
